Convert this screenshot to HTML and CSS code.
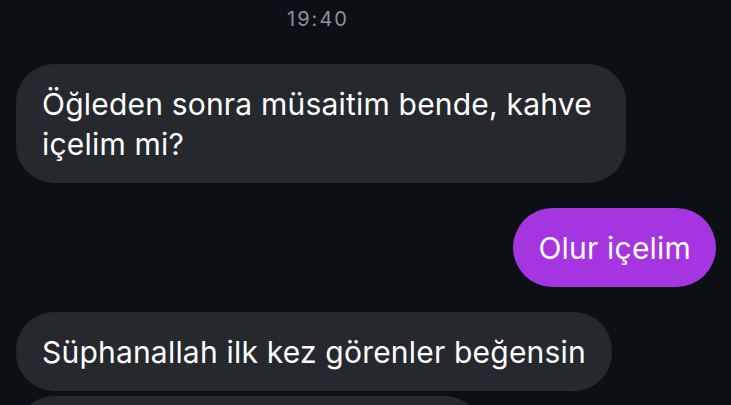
FILE: index.html
```html
<!DOCTYPE html>
<html lang="tr">
<head>
    <meta charset="utf-8">
    <title>Mesajlar</title>
    <link rel="stylesheet" href="styles.css">
</head>
<body>
    <div class="chat">
        <div class="time">19:40</div>

        <div class="msg in">Öğleden sonra müsaitim bende, kahve içelim mi?</div>
        <div class="msg out">Olur içelim</div>
        <div class="msg in">Süphanallah ilk kez görenler beğensin</div>
        <div class="msg in next">Tamam, o zaman saat kaçta?</div>
    </div>
</body>
</html>
```

FILE: styles.css
```css
body {
    margin: 0;
    padding: 0;
    background-color: #0c1015;
    font-family: Inter, "Noto Sans", sans-serif;
    overflow: hidden;
}

.chat {
    display: flex;
    flex-direction: column;
    padding: 0 15px 0 16px;
}

.time {
    align-self: center;
    margin: 5px 96px 0 0;
    color: #8e9298;
    font-size: 20px;
    line-height: 28px;
    letter-spacing: 2px;
}

.msg {
    max-width: 558px;
    padding: 20px 26px 19px 26px;
    border-radius: 38px;
    font-size: 30px;
    line-height: 40px;
    letter-spacing: 0.2px;
    color: #ffffff;
    margin-top: 25px;
}

.msg.in {
    align-self: flex-start;
    background-color: #25282d;
}

.msg.out {
    align-self: flex-end;
    background-color: #a535e0;
    border-radius: 40px;
    padding: 20px 25px 19px 25px;
}

.msg.next {
    margin-top: 5px;
}

.chat > .time + .msg {
    margin-top: 31px;
}
```
